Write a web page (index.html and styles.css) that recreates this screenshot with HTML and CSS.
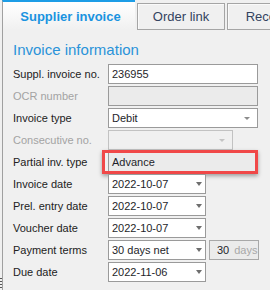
FILE: index.html
```html
<!DOCTYPE html>
<html lang="en">
<head>
  <meta charset="UTF-8">
  <title>Supplier invoice</title>
  <link rel="stylesheet" href="styles.css">
</head>
<body>
  <div class="tabs">
    <div class="tab-active">Supplier invoice</div>
    <div class="tab">Order link</div>
    <div class="tab">Receipts</div>
    <div class="tab-rest"></div>
  </div>
  <div class="panel">
    <div class="grip"></div>
    <h2>Invoice information</h2>
    <div class="row">
      <label>Suppl. invoice no.</label>
      <div class="field w-full">236955</div>
    </div>
    <div class="row">
      <label class="off">OCR number</label>
      <div class="field w-full ro"></div>
    </div>
    <div class="row">
      <label>Invoice type</label>
      <div class="field w-full combo">Debit<span class="arrow small"></span></div>
    </div>
    <div class="row">
      <label class="off">Consecutive no.</label>
      <div class="field w-mid combo disabled"><span class="arrow small"></span></div>
    </div>
    <div class="row">
      <label>Partial inv. type</label>
      <div class="field w-full ro">Advance<span class="highlight"></span></div>
    </div>
    <div class="row">
      <label>Invoice date</label>
      <div class="field w-date combo">2022-10-07<span class="arrow"></span></div>
    </div>
    <div class="row">
      <label>Prel. entry date</label>
      <div class="field w-date combo">2022-10-07<span class="arrow"></span></div>
    </div>
    <div class="row">
      <label>Voucher date</label>
      <div class="field w-date combo">2022-10-07<span class="arrow"></span></div>
    </div>
    <div class="row">
      <label>Payment terms</label>
      <div class="field w-date combo">30 days net<span class="arrow"></span></div>
      <div class="field days"><b>30</b> days</div>
    </div>
    <div class="row">
      <label>Due date</label>
      <div class="field w-date combo">2022-11-06<span class="arrow"></span></div>
    </div>
  </div>
</body>
</html>
```

FILE: styles.css
```css
html, body {
  margin: 0; padding: 0;
  font-family: "Liberation Sans", Arial, sans-serif;
  background: #f0f0f0; color: #222;
  overflow: hidden;
}
.tabs {
  display: flex; align-items: flex-end;
  height: 30px; padding-left: 2px;
  white-space: nowrap;
}
.tab-active {
  flex: none;
  width: 133px; height: 30px; box-sizing: border-box;
  border-top: 2px solid #1d9de6; border-left: 1px solid #a0a0a0;
  background: linear-gradient(#ffffff, #f0f0f0);
  display: flex; align-items: center; justify-content: center;
  padding-left: 3px;
  font-size: 13px; font-weight: bold; color: #1a93e0;
}
.tab {
  flex: none;
  margin-left: 2px;
  width: 88px; height: 27px; box-sizing: border-box;
  border: 1px solid #a5a5a5;
  box-shadow: inset 1px 1px 0 #fafafa;
  background: #f0f0f0;
  display: flex; align-items: center; justify-content: center;
  font-size: 13px; color: #33435f;
}
.tab-rest { flex: 1; border-bottom: 1px solid #a5a5a5; }
.panel {
  position: relative;
  margin-left: 2px;
  border-left: 1px solid #a0a0a0;
  padding-left: 10px;
  min-height: 260px;
}
.grip {
  position: absolute; left: -3px; top: 248px;
  width: 2px; height: 12px;
  background: repeating-linear-gradient(#555 0 1px, transparent 1px 3px);
}
h2 {
  margin: 0; padding: 11px 0 5px;
  font-size: 15px; line-height: 18px; font-weight: normal;
  color: #2a93d9;
}
.row { display: flex; align-items: center; height: 20px; margin-bottom: 2px; }
.row label { width: 95px; flex: none; font-size: 11px; color: #222; }
.row label.off { color: #a3a3a3; }
.field {
  position: relative;
  box-sizing: border-box; height: 20px;
  border: 1px solid #9a9a9a; background: #fff;
  display: flex; align-items: center;
  padding-left: 3px;
  font-size: 11px; color: #1e1e2a;
}
.field.ro { background: #ebebeb; }
.field.disabled { background: #f0f0f0; border-color: #c2c2c2; }
.w-full { width: 150px; }
.w-mid { width: 125px; }
.w-date { width: 98px; }
.arrow {
  position: absolute; right: 3px; top: 7px;
  border-left: 3.5px solid transparent; border-right: 3.5px solid transparent;
  border-top: 4px solid #6e6e6e;
}
.arrow.small {
  right: 7px; top: 8px;
  border-left-width: 3px; border-right-width: 3px; border-top-width: 3px;
  border-top-color: #8c8c8c;
}
.disabled .arrow { border-top-color: #c4c4c4; }
.field.days {
  margin-left: 3px; width: 50px;
  background: #ebebeb; border-color: #a8a8a8;
  padding-left: 7px; color: #a8a8a8;
}
.field.days b { font-weight: normal; color: #1e1e2a; margin-right: 5px; }
.highlight {
  position: absolute; left: -7px; right: -1px; top: -3px; bottom: -3px;
  border: 3px solid #f04848;
  box-shadow: 0 2px 4px rgba(0,0,0,0.35);
}
```
